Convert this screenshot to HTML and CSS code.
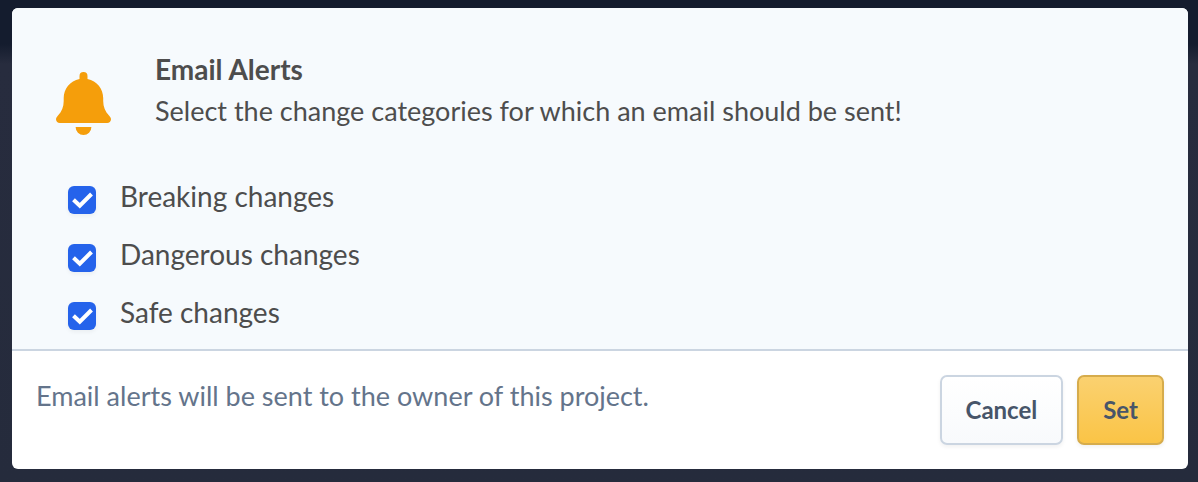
FILE: index.html
```html
<!DOCTYPE html>
<html lang="en">
<head>
<meta charset="utf-8">
<meta name="viewport" content="width=device-width, initial-scale=1">
<title>Email Alerts</title>
<link rel="stylesheet" href="styles.css">
</head>
<body>
<form class="dialog" role="dialog" aria-labelledby="dialog-title">
  <div class="content">
    <header class="intro">
      <svg class="bell" viewBox="0 0 55 63" aria-hidden="true">
        <path d="M27.500 0a4 4 0 0 0-4 4v2.900C14 8.800 7.700 16.600 7.700 26v3c0 6-2 10.500-5.700 14.500L1 44.700C.3 45.400 0 46.300 0 47.300 0 49.500 1.700 51 3.800 51h47.400c2.100 0 3.800-1.500 3.800-3.700 0-1-.3-1.900-1-2.600l-1-1.200C49.300 39.500 47.200 35 47.200 29v-3c0-9.400-6.200-17.200-15.700-19.100V4a4 4 0 0 0-4-4z"/>
        <path d="M19.600 55h15.800a7.900 8 0 0 1-15.800 0z"/>
      </svg>
      <div class="heading">
        <h1 class="title" id="dialog-title">Email Alerts</h1>
        <p class="description">Select the change categories for which an email should be sent!</p>
      </div>
    </header>
    <div class="options">
      <label class="option"><input class="checkbox" type="checkbox" checked><span class="option-text">Breaking changes</span></label>
      <label class="option"><input class="checkbox" type="checkbox" checked><span class="option-text">Dangerous changes</span></label>
      <label class="option"><input class="checkbox" type="checkbox" checked><span class="option-text">Safe changes</span></label>
    </div>
  </div>
  <footer class="footer">
    <p class="note">Email alerts will be sent to the owner of this project.</p>
    <div class="actions">
      <button class="button" type="button">Cancel</button>
      <button class="button button-primary" type="submit">Set</button>
    </div>
  </footer>
</form>
</body>
</html>
```
FILE: styles.css
```css
* { box-sizing: border-box; }

html { min-height: 100%; }

body {
  margin: 0;
  padding: 8px 10px 13px 12px;
  background: linear-gradient(#141c2e 0, #141c2e 44px, #272c3e 64px, #252b3c 100%);
  font-family: Lato, "Open Sans", sans-serif;
  font-size: 28px;
  line-height: 42px;
  color: #4d4d4d;
}

.dialog {
  overflow: hidden;
  border-radius: 6px;
  background: #fff;
}

.content {
  padding: 40px 44px 4px;
  background: #f6fafd;
  border-bottom: 2px solid #cbd5e1;
}

.intro {
  display: flex;
  align-items: flex-start;
  gap: 44px;
}

.bell {
  flex: none;
  width: 55px;
  height: 63px;
  margin-top: 24px;
  fill: #f59e0b;
}

.title,
.description,
.note { margin: 0; }

.title {
  font-size: 28px;
  font-weight: 700;
}

.description,
.note { font-size: 27px; }

.options {
  padding: 36px 12px 0;
}

.option {
  display: flex;
  align-items: center;
  gap: 24px;
  width: fit-content;
  height: 58px;
}

.option-text { margin-bottom: 8px; }

.checkbox {
  appearance: none;
  flex: none;
  width: 28px;
  height: 28px;
  margin: 0;
  border: 2px solid #cbd5e1;
  border-radius: 6px;
  background: #fff;
  box-shadow: 0 2px 4px rgb(0 0 0 / 5%);
}

.checkbox:checked {
  border: 0;
  background: #2563eb url("data:image/svg+xml,%3Csvg xmlns='http://www.w3.org/2000/svg' viewBox='0 0 28 28'%3E%3Cpath d='M5.500 13.700l6.300 6L23.500 8' fill='none' stroke='white' stroke-width='4'/%3E%3C/svg%3E") center / 100%;
}

.footer {
  display: flex;
  align-items: flex-start;
  justify-content: space-between;
  gap: 24px;
  padding: 24px;
}

.note { color: #64748b; }

.actions {
  display: flex;
  gap: 14px;
}

.button {
  height: 70px;
  padding: 0 24px;
  border: 2px solid #cbd5e1;
  border-radius: 7px;
  background: linear-gradient(#fff, #f8fafc);
  box-shadow: 0 2px 4px rgb(0 0 0 / 6%);
  color: #475569;
  font: inherit;
  font-size: 24px;
  font-weight: 700;
}

.button-primary {
  border-color: #d6ac4c;
  background: linear-gradient(#fad170, #fac446);
}
```
